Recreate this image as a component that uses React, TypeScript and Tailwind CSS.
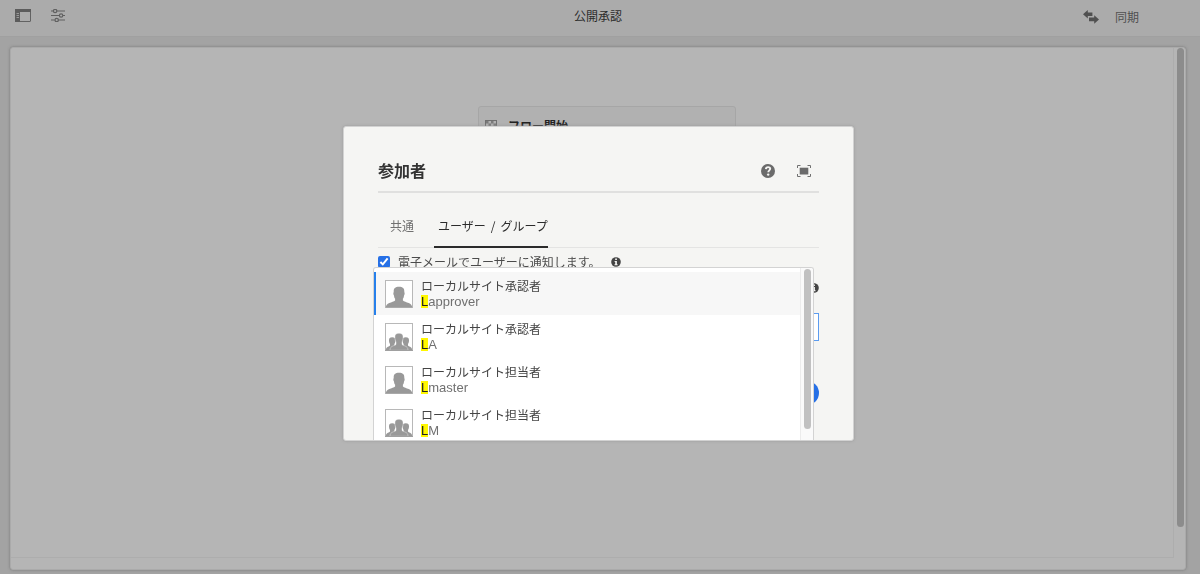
import { useState } from 'react';

type Kind = 'user' | 'group';

interface Participant {
    id: string;
    label: string;
    kind: Kind;
}

const participants: Participant[] = [
    { id: 'Lapprover', label: 'ローカルサイト承認者', kind: 'user' },
    { id: 'LA', label: 'ローカルサイト承認者', kind: 'group' },
    { id: 'Lmaster', label: 'ローカルサイト担当者', kind: 'user' },
    { id: 'LM', label: 'ローカルサイト担当者', kind: 'group' },
];

function PanelIcon() {
    return (
        <svg width="16" height="13" viewBox="0 0 16 13" fill="none">
            <rect x="0.5" y="0.5" width="15" height="12" rx="0.5" stroke="#626262" />
            <path d="M0 0h16v3H0zM0 3h5v10H0z" fill="#5c5c5c" />
            <path d="M1.5 4.5h2.5M1.5 6.5h2.5M1.5 8.5h2.5" stroke="#989898" />
        </svg>
    );
}

function SlidersIcon() {
    return (
        <svg width="14" height="13" viewBox="0 0 14 13" fill="none" stroke="#606060" strokeWidth="1.2">
            <path d="M0 2h2.2M6 2h8M0 6.5h8.2M12 6.5h2M0 11h3.8M7.6 11H14" />
            <circle cx="4.1" cy="2" r="1.7" />
            <circle cx="10.1" cy="6.5" r="1.7" />
            <circle cx="5.7" cy="11" r="1.7" />
        </svg>
    );
}

function SyncIcon() {
    return (
        <svg width="16" height="14" viewBox="0 0 16 14" fill="#505050">
            <path d="M0 4.2 4.8 0v2.4h4.600v3.700H4.800v2.400z" />
            <path d="M16 9.400 11.200 5.200v2.400H6v3.700h5.200v2.400z" />
        </svg>
    );
}

function StartIcon() {
    return (
        <svg width="12" height="12" viewBox="0 0 12 12" fill="none">
            <rect x="0.5" y="0.5" width="11" height="11" stroke="#6f6f6f" />
            <path d="M1 1h2.5v2.5H1zM6 1h2.5v2.5H6zM3.5 3.5H6V6H3.5zM8.5 3.5H11V6H8.5zM1 6h2.5v2.5H1zM6 6h2.5v2.5H6zM3.5 8.5H6V11H3.5z" fill="#7a7a7a" />
        </svg>
    );
}

function HelpIcon() {
    return (
        <svg width="14" height="14" viewBox="0 0 14 14">
            <circle cx="7" cy="7" r="7" fill="#6b6b6b" />
            <path d="M4.9 5.1C5 3.7 5.9 3.1 7.1 3.1c1.300 0 2.100.7 2.100 1.700 0 1.500-1.900 1.600-1.900 3.400" fill="none" stroke="#f5f5f3" strokeWidth="1.9" />
            <circle cx="7.2" cy="10.6" r="1.2" fill="#f5f5f3" />
        </svg>
    );
}

function FullscreenIcon() {
    return (
        <svg width="14" height="12" viewBox="0 0 14 12">
            <path d="M.5 3V.5h3M10.500 .5h3V3M13.500 9v2.500h-3M3.500 11.500h-3V9" fill="none" stroke="#707070" />
            <rect x="2.700" y="2.700" width="8.600" height="6.800" fill="#6b6b6b" />
        </svg>
    );
}

function InfoIcon() {
    return (
        <svg width="10" height="10" viewBox="0 0 10 10">
            <circle cx="5" cy="5" r="4.800" fill="#444444" />
            <path d="M4.200 1.600h1.700v1.500H4.200zM3.600 4h2.300v3.300h.7v1H3.500v-1h.7V5h-.6z" fill="#f5f5f3" />
        </svg>
    );
}

function Avatar({ kind }: { kind: Kind }) {
    return (
        <svg width="28" height="28" viewBox="0 0 28 28" className="shrink-0" fill="#999999">
            <rect x="0.5" y="0.5" width="27" height="27" fill="#ffffff" stroke="#b8b8b8" />
            {kind === 'user' ? (
                <path d="M14 6.800C17.800 6.800 19.300 8.500 19.300 11.200V12.300C19.900 12.600 19.700 14.900 19 15.400C18.900 17 18.500 18 17.900 18.600V20.600C19 21.700 21.500 22.200 23.700 23.100C25.900 24 27 25.300 27.300 27.500H.7C1 25.300 2.100 24 4.300 23.100C6.500 22.200 9 21.700 10.100 20.600V18.600C9.500 18 9.100 17 9 15.400C8.300 14.900 8.100 12.600 8.700 12.300V11.200C8.700 8.500 10.200 6.800 14 6.800Z" />
            ) : (
                <>
                    <path d="M7.200 14.200C9.600 14.200 10.400 15.400 10.400 17.200C10.400 18.900 10 20.200 9.400 20.900V22.500L11 23.500V27.300H.8C.9 24.800 2 24.100 3.600 23.500C4.400 23.200 4.900 22.900 5 22.500V20.900C4.400 20.200 4 18.900 4 17.200C4 15.400 4.800 14.200 7.200 14.200Z" />
                    <path d="M20.800 14.200C18.400 14.200 17.600 15.400 17.600 17.200C17.600 18.900 18 20.200 18.600 20.900V22.500L17 23.500V27.300H27.200C27.100 24.800 26 24.100 24.400 23.500C23.600 23.200 23.100 22.900 23 22.500V20.900C23.600 20.200 24 18.900 24 17.200C24 15.400 23.200 14.200 20.800 14.200Z" />
                    <path
                        d="M14 10.200C17 10.200 18.100 11.600 18.100 14C18.100 16.400 17.700 18 17 18.900V21.400C17.500 22.100 19 22.500 20.300 23.100C22 23.900 22.900 24.700 23.100 27.300H4.900C5.100 24.700 6 23.900 7.700 23.100C9 22.500 10.500 22.100 11 21.400V18.900C10.300 18 9.900 16.400 9.900 14C9.900 11.600 11 10.200 14 10.200Z"
                        stroke="#ffffff"
                        strokeWidth="0.4"
                    />
                    <path d="M0 27.500h28" stroke="#a0a0a0" />
                </>
            )}
        </svg>
    );
}

function TopBar() {
    return (
        <header className="grid h-[37px] shrink-0 grid-cols-[1fr_auto_1fr] items-center border-b border-[#a0a0a0] bg-[#ababab] pr-[61px] pb-1 pl-[15px]">
            <div className="flex items-center gap-5 pb-0.5">
                <button aria-label="サイドパネル"><PanelIcon /></button>
                <button aria-label="設定"><SlidersIcon /></button>
            </div>
            <h1 className="ml-[42px] text-[#2b2b2b]">公開承認</h1>
            <button className="flex items-center gap-4 justify-self-end pt-0.5 text-[#505050]">
                <SyncIcon />
                同期
            </button>
        </header>
    );
}

function Canvas() {
    return (
        <main className="min-h-0 flex-1 bg-[#a3a3a3] pt-2.5 pr-[14px] pb-1 pl-2.5">
            <div className="flex h-full rounded-[3px] border border-[#aaaaaa] bg-[#b5b5b5] pb-[11px] shadow-[0_0_3px_#777777]">
                <div className="flex flex-1 items-start justify-center border-r border-b border-[#adadad] pt-[58px] pl-[30px]">
                    <section className="flex w-[258px] items-center gap-[11px] rounded-[3px] border border-[#a6a6a6] bg-[#b1b1b1] px-1.5 pt-[11px] pb-3">
                        <StartIcon />
                        <h2 className="leading-4 font-bold text-[#222222]">フロー開始</h2>
                    </section>
                </div>
                <div className="flex w-[11px] justify-end pr-px">
                    <div className="h-[94%] w-[7px] rounded-full bg-[#8c8c8c]" />
                </div>
            </div>
        </main>
    );
}

function Suggestions() {
    const [active, setActive] = useState(participants[0].id);

    return (
        <div className="absolute top-[19px] right-[5px] bottom-0 -left-[5px] flex overflow-hidden rounded-t-[3px] border border-b-0 border-[#d3d3d3] bg-white">
            <ul role="listbox" aria-label="ユーザー / グループ" className="flex-1 pt-1">
                {participants.map((p) => (
                    <li
                        key={p.id}
                        role="option"
                        aria-selected={p.id === active}
                        onMouseEnter={() => setActive(p.id)}
                        className={`flex h-[43px] items-center gap-2 border-l-2 px-[9px] ${p.id === active ? 'border-[#2680eb] bg-[#f7f7f7]' : 'border-transparent'}`}
                    >
                        <Avatar kind={p.kind} />
                        <div className="leading-4">
                            <div className="text-[#444444]">{p.label}</div>
                            <div className="font-['Liberation_Sans',sans-serif] text-[13px] leading-4 text-[#707070]">
                                <mark className="inline-block bg-[#fff700] leading-[13px] text-[#222222]">{p.id[0]}</mark>
                                {p.id.slice(1)}
                            </div>
                        </div>
                    </li>
                ))}
            </ul>
            <div className="flex w-[13px] justify-center border-l border-[#ececec] bg-[#fafafa] pt-px">
                <div className="h-[160px] w-[7px] rounded-full bg-[#c1c1c1]" />
            </div>
        </div>
    );
}

function ParticipantDialog() {
    const [notify, setNotify] = useState(true);

    return (
        <div
            role="dialog"
            aria-labelledby="dialog-title"
            className="w-[511px] overflow-hidden rounded-[3px] border border-[#d2d2d2] bg-[#f5f5f3] px-[34px] shadow-[0_0_3px_#999999]"
        >
            <div className="flex items-end border-b-2 border-[#e0e0df] pt-[31px] pb-[9px]">
                <h2 id="dialog-title" className="flex-1 text-base leading-6 font-bold text-[#333333]">参加者</h2>
                <div className="flex items-center gap-[22px] pr-2 pb-1">
                    <button aria-label="ヘルプ"><HelpIcon /></button>
                    <button aria-label="全画面"><FullscreenIcon /></button>
                </div>
            </div>

            {/* Tabs */}
            <div role="tablist" className="mt-3 flex h-[43px] gap-5 border-b border-[#e4e4e3] pl-3">
                <button role="tab" aria-selected="false" className="text-[#707070]">共通</button>
                <button role="tab" aria-selected="true" className="-mb-px flex items-center gap-[5px] border-b-2 border-[#2b2b2b] pl-1 text-[#2b2b2b]">
                    <span>ユーザー</span>
                    <span>/</span>
                    <span>グループ</span>
                </button>
            </div>

            <form className="relative pt-1.5 pb-[35px]">
                <div className="flex h-4 items-center gap-2.5">
                    <label className="flex items-center gap-2 text-[#4b4b4b]">
                        <input
                            type="checkbox"
                            checked={notify}
                            onChange={(e) => setNotify(e.target.checked)}
                            className="size-3 accent-[#2670e6]"
                        />
                        電子メールでユーザーに通知します。
                    </label>
                    <InfoIcon />
                </div>
                <div className="mt-2.5 flex h-4 items-center justify-end">
                    <InfoIcon />
                </div>
                <input
                    aria-label="ユーザー / グループ"
                    className="mt-[17px] block h-7 w-full border border-[#5c9cf0] bg-white px-2 outline-none"
                />
                <div className="mt-10 flex justify-end">
                    <button type="button" aria-label="追加" className="size-6 rounded-full bg-[#2670e6]" />
                </div>
                <Suggestions />
            </form>
        </div>
    );
}

export default function App() {
    return (
        <div className="flex h-screen flex-col overflow-hidden font-['Noto_Sans_CJK_JP',sans-serif] text-xs">
            <TopBar />
            <Canvas />
            <div className="fixed inset-0 flex items-center justify-center pr-[3px] pb-[7px]">
                <ParticipantDialog />
            </div>
        </div>
    );
}
